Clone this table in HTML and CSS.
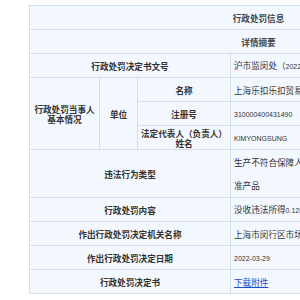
FILE: index.html
```html
<!DOCTYPE html>
<html lang="zh-CN">
<head>
<meta charset="utf-8">
<title>行政处罚信息</title>
<link rel="stylesheet" href="styles.css">
</head>
<body>
<div class="page">
<table class="info">
  <colgroup>
    <col class="c1"><col class="c2"><col class="c3"><col class="c4">
  </colgroup>
  <tr><th colspan="4" class="head">行政处罚信息</th></tr>
  <tr><th colspan="4" class="head">详情摘要</th></tr>
  <tr><td colspan="3" class="label">行政处罚决定书文号</td><td class="value">沪市监闵处（<span class="num">2022</span>）<span class="num">1220210022</span>号</td></tr>
  <tr>
    <td rowspan="3" class="label wrap">行政处罚当事人<br>基本情况</td>
    <td rowspan="3" class="label">单位</td>
    <td class="label">名称</td>
    <td class="value">上海乐扣乐扣贸易有限公司</td>
  </tr>
  <tr><td class="label">注册号</td><td class="value"><span class="num">310000400431490</span></td></tr>
  <tr><td class="label wrap2">法定代表人（负责人）<br>姓名</td><td class="value"><span class="num">KIMYONGSUNG</span></td></tr>
  <tr class="tall"><td colspan="3" class="label">违法行为类型</td><td class="value multi">生产不符合保障人体健康和人身、财产安全的国家标准、行业标<br>准产品</td></tr>
  <tr><td colspan="3" class="label">行政处罚内容</td><td class="value">没收违法所得<span class="num">0.128</span>万元，罚款</td></tr>
  <tr><td colspan="3" class="label">作出行政处罚决定机关名称</td><td class="value">上海市闵行区市场监督管理局</td></tr>
  <tr><td colspan="3" class="label">作出行政处罚决定日期</td><td class="value"><span class="num">2022-03-29</span></td></tr>
  <tr><td colspan="3" class="label">行政处罚决定书</td><td class="value"><a class="link" href="#">下载附件</a></td></tr>
</table>
</div>
</body>
</html>
```

FILE: styles.css
```css
html, body {
  margin: 0;
  padding: 0;
  overflow: hidden;
  background: #ffffff;
}
.page {
  padding: 5px 0 0 29px;
}
.info {
  border-collapse: collapse;
  table-layout: fixed;
  width: 458px;
  font-family: "Noto Sans CJK SC", "Liberation Sans", sans-serif;
  font-size: 8.6px;
  color: #333333;
  background: #f3f8fe;
}
.c1 { width: 70px; }
.c2 { width: 38px; }
.c3 { width: 93px; }
.c4 { width: 257px; }
.info th, .info td {
  border: 1px solid #d2dfe9;
  height: 23px;
  padding: 0;
  vertical-align: middle;
  line-height: 10px;
}
.head {
  text-align: center;
  font-weight: bold;
  color: #444444;
}
.label {
  text-align: center;
  font-weight: bold;
  color: #333333;
}
.wrap {
  line-height: 10px;
}
.wrap2 {
  line-height: 11px;
}
.value {
  text-align: left;
  padding: 0 3px !important;
  white-space: nowrap;
  overflow: hidden;
}
.tall td {
  height: 47px;
}
.multi {
  line-height: 23px !important;
}
.num {
  font-family: "Liberation Sans", sans-serif;
  font-size: 7px;
}
.link {
  color: #1a4fcc;
  text-decoration: underline;
}
```
